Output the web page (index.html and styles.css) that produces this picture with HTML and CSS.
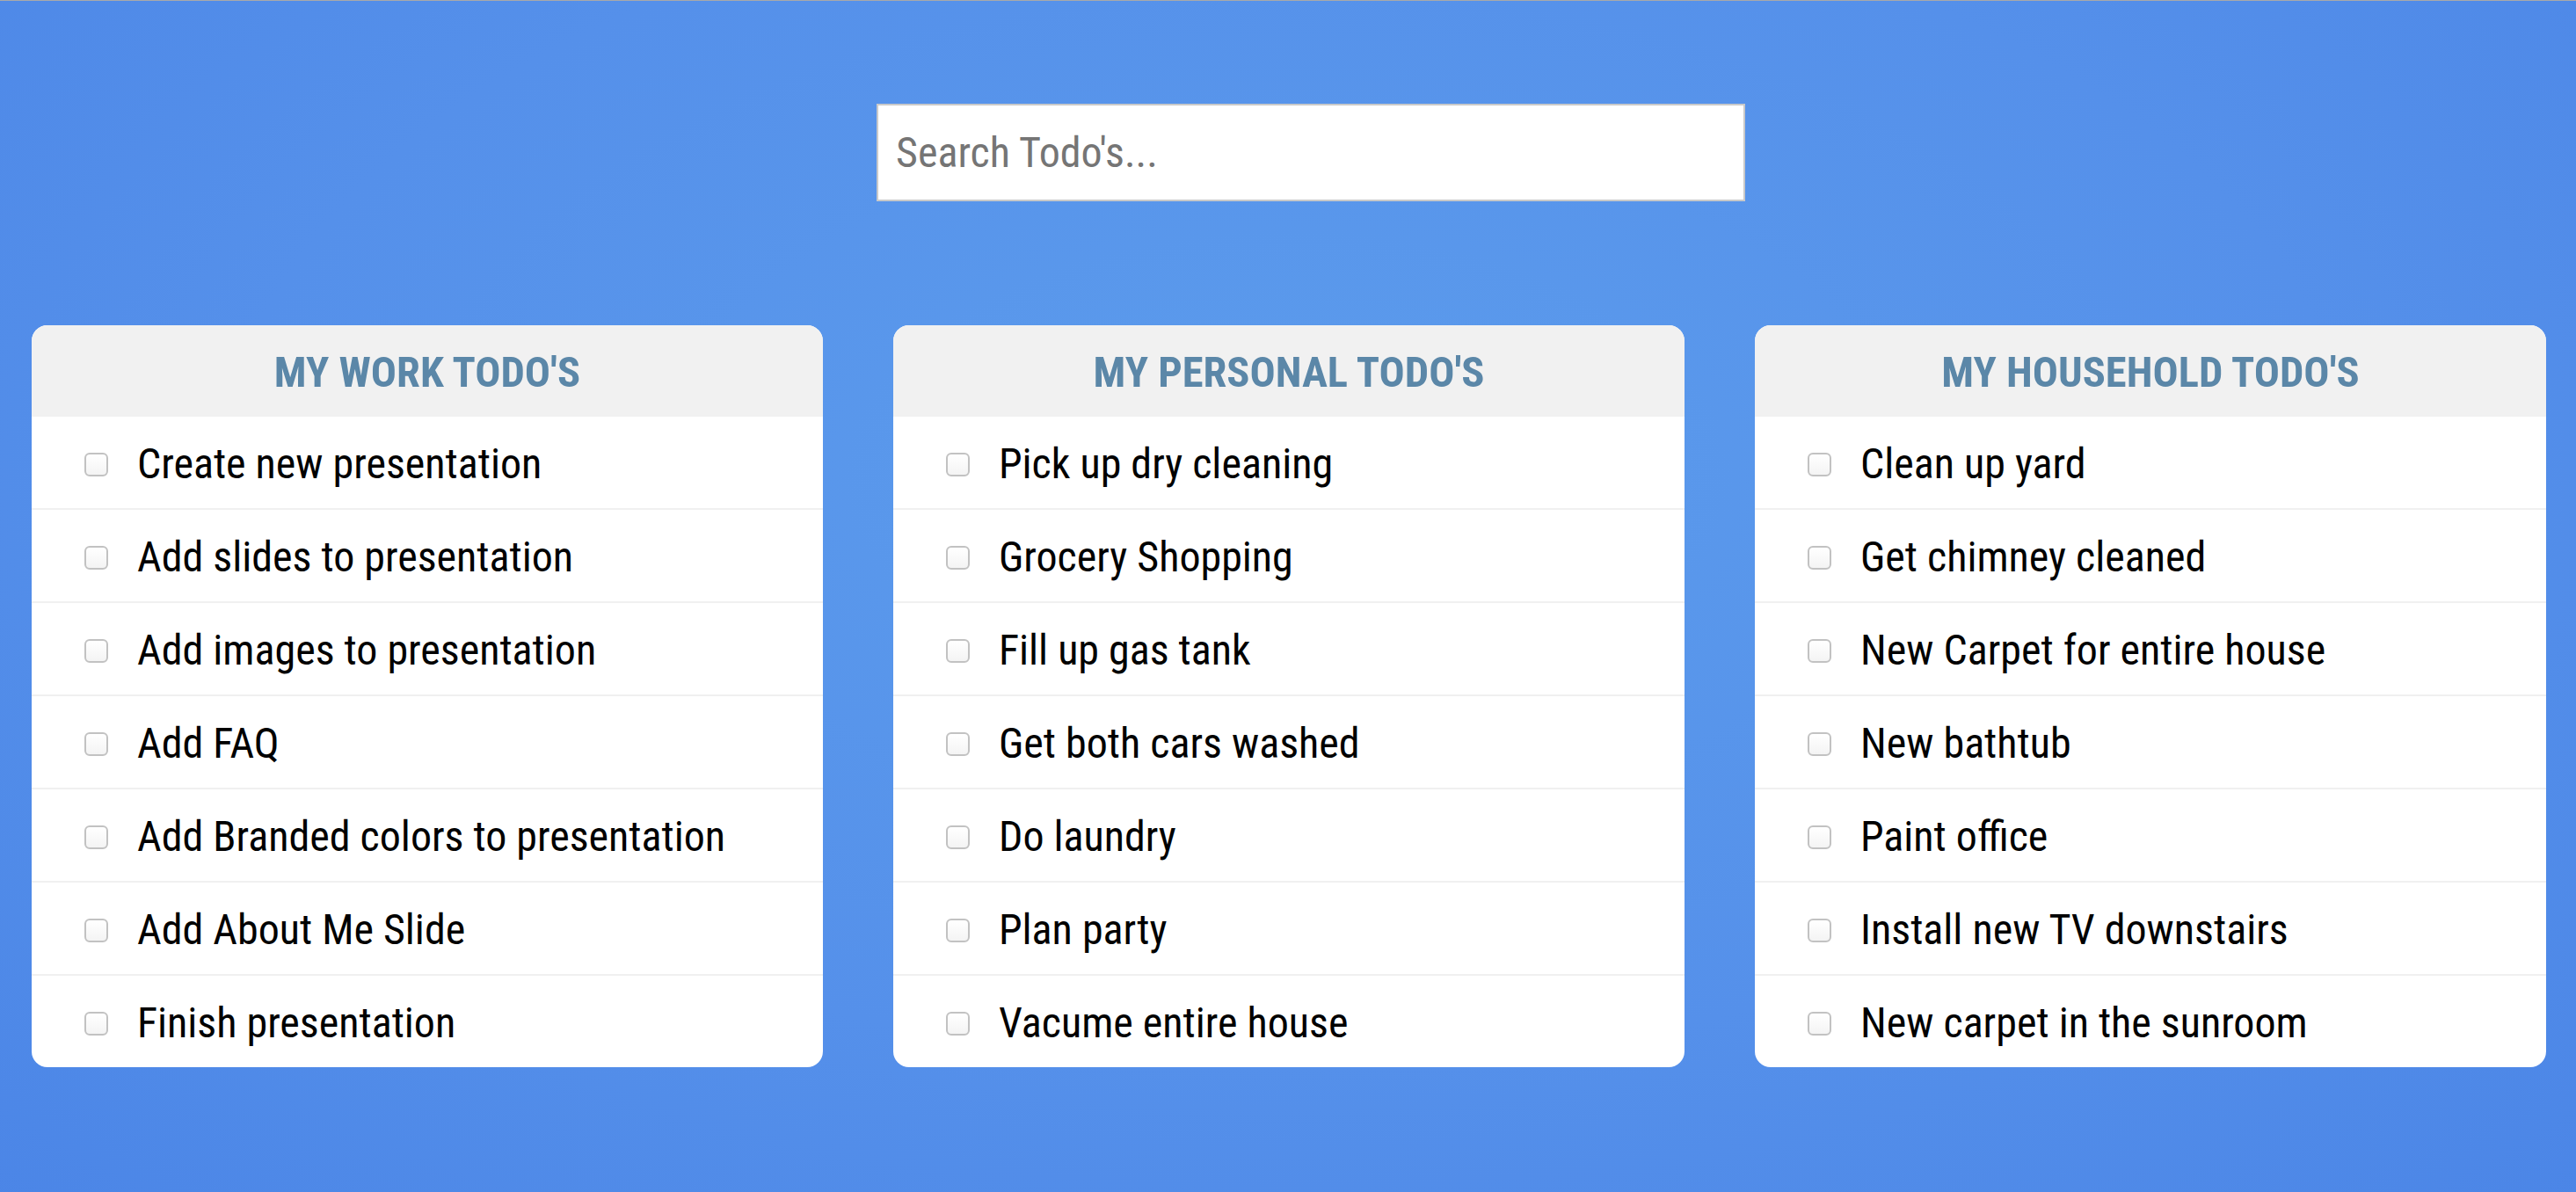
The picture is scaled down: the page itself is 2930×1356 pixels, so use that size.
FILE: index.html
```html
<!DOCTYPE html>
<html lang="en">
<head>
<meta charset="utf-8">
<title>Todo's</title>
<link rel="stylesheet" href="styles.css">
</head>
<body>
<main class="page">
  <div class="search-wrap">
    <input class="search" type="text" placeholder="Search Todo's...">
  </div>
  <section class="lists">
    <article class="card">
      <h2 class="card-title">MY WORK TODO'S</h2>
      <ul class="items">
        <li class="item"><span class="check"></span><span class="label">Create new presentation</span></li>
        <li class="item"><span class="check"></span><span class="label">Add slides to presentation</span></li>
        <li class="item"><span class="check"></span><span class="label">Add images to presentation</span></li>
        <li class="item"><span class="check"></span><span class="label">Add FAQ</span></li>
        <li class="item"><span class="check"></span><span class="label">Add Branded colors to presentation</span></li>
        <li class="item"><span class="check"></span><span class="label">Add About Me Slide</span></li>
        <li class="item"><span class="check"></span><span class="label">Finish presentation</span></li>
      </ul>
    </article>
    <article class="card">
      <h2 class="card-title">MY PERSONAL TODO'S</h2>
      <ul class="items">
        <li class="item"><span class="check"></span><span class="label">Pick up dry cleaning</span></li>
        <li class="item"><span class="check"></span><span class="label">Grocery Shopping</span></li>
        <li class="item"><span class="check"></span><span class="label">Fill up gas tank</span></li>
        <li class="item"><span class="check"></span><span class="label">Get both cars washed</span></li>
        <li class="item"><span class="check"></span><span class="label">Do laundry</span></li>
        <li class="item"><span class="check"></span><span class="label">Plan party</span></li>
        <li class="item"><span class="check"></span><span class="label">Vacume entire house</span></li>
      </ul>
    </article>
    <article class="card">
      <h2 class="card-title">MY HOUSEHOLD TODO'S</h2>
      <ul class="items">
        <li class="item"><span class="check"></span><span class="label">Clean up yard</span></li>
        <li class="item"><span class="check"></span><span class="label">Get chimney cleaned</span></li>
        <li class="item"><span class="check"></span><span class="label">New Carpet for entire house</span></li>
        <li class="item"><span class="check"></span><span class="label">New bathtub</span></li>
        <li class="item"><span class="check"></span><span class="label">Paint office</span></li>
        <li class="item"><span class="check"></span><span class="label">Install new TV downstairs</span></li>
        <li class="item"><span class="check"></span><span class="label">New carpet in the sunroom</span></li>
      </ul>
    </article>
  </section>
</main>
</body>
</html>
```
FILE: styles.css
```css
html, body {
  margin: 0;
  padding: 0;
}

body {
  font-family: "Roboto Condensed", "Roboto", "Liberation Sans", sans-serif;
  font-stretch: condensed;
  background: radial-gradient(ellipse 75% 90% at 50% 40%, #5c9cec 0%, #5590ea 55%, #4a84e6 100%);
  min-height: 100vh;
  border-top: 1px solid #a9a9a9;
  box-sizing: border-box;
}

.page {
  padding: 117px 34px 0 36px;
}

.search-wrap {
  display: flex;
  justify-content: center;
  padding-left: 50px;
}

.search {
  box-sizing: border-box;
  width: 988px;
  height: 111px;
  border: 2px solid #c9c9c9;
  background: #fff;
  padding: 0 0 0 20px;
  font-family: inherit;
  font-size: 48px;
  color: #333;
  outline: none;
}

.search::placeholder {
  color: #757575;
}

.lists {
  display: grid;
  grid-template-columns: repeat(3, 900px);
  column-gap: 80px;
  margin-top: 141px;
  align-items: start;
}

.card {
  background: #fff;
  border-radius: 18px;
  overflow: hidden;
}

.card-title {
  margin: 0;
  height: 104px;
  display: flex;
  align-items: center;
  justify-content: center;
  background: #f1f1f1;
  color: #5b87a8;
  font-size: 48.5px;
  font-weight: 700;
  padding-top: 2px;
  box-sizing: border-box;
}

.items {
  list-style: none;
  margin: 0;
  padding: 0;
}

.item {
  height: 104px;
  display: flex;
  align-items: center;
  padding: 0 60px;
  border-bottom: 2px solid #f0f0f0;
}

.item:last-child {
  border-bottom: none;
}

.check {
  box-sizing: border-box;
  width: 27px;
  height: 27px;
  border: 2px solid #c2c2c2;
  border-radius: 6px;
  background: linear-gradient(#ffffff, #f4f4f4);
  flex: none;
  margin-top: 4px;
}

.label {
  margin-left: 33px;
  font-size: 48px;
  color: #000;
  padding-top: 2px;
}
```
